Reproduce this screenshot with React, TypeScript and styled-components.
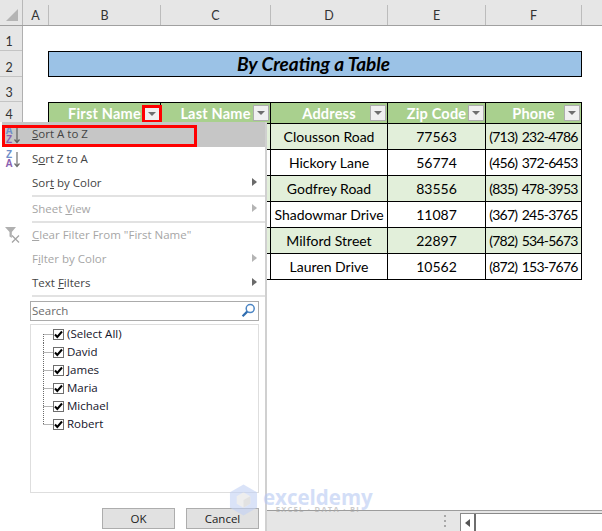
import React from 'react'
import styled, { createGlobalStyle } from 'styled-components'

const uiFont = `"Open Sans", "Noto Sans", "Liberation Sans", sans-serif`
const cellFont = `Lato, "Open Sans", "Liberation Sans", sans-serif`
const columns = '23px 26px 112px 110px 117px 98px 96px 1fr'

const GlobalStyle = createGlobalStyle`
  html, body {
    margin: 0;
    padding: 0;
    background: #fff;
    overflow: hidden;
  }
  * {
    box-sizing: border-box;
  }
`

const Sheet = styled.div`
  position: relative;
  width: 602px;
  height: 531px;
  display: flex;
  flex-direction: column;
  overflow: hidden;
  background: #fff;
`

const ColumnBar = styled.div`
  display: grid;
  grid-template-columns: ${columns};
  height: 26px;
  background: #e6e6e6;
  border-bottom: 1px solid #a0a0a0;
`

const Corner = styled.div`
  display: flex;
  align-items: flex-end;
  padding: 0 0 4px 6px;
  border-right: 1px solid #b8b8b8;
`

const ColumnLabel = styled.div`
  display: flex;
  align-items: center;
  justify-content: center;
  padding-top: 5px;
  font: 12.5px ${cellFont};
  color: #333;
  border-right: 1px solid #bcbcbc;
  border-image: linear-gradient(to bottom, transparent 6px, #bcbcbc 6px) 1;
  &:last-child {
    border-right: 0;
  }
`

const Body = styled.div`
  flex: 1;
  display: flex;
  min-height: 0;
`

const RowGutter = styled.div`
  width: 23px;
  background: #e6e6e6;
  border-right: 1px solid #b0b0b0;
`

const RowLabel = styled.div<{ $h: number }>`
  height: ${(p) => p.$h}px;
  display: flex;
  align-items: flex-end;
  justify-content: center;
  padding: 0 4px 1px 0;
  font: 12.5px/15px ${cellFont};
  color: #333;
  border-bottom: 1px solid #c4c4c4;
`

const Canvas = styled.div`
  flex: 1;
  padding: 25px 0 0 25px;
`

const TitleBar = styled.div`
  width: 534px;
  height: 26px;
  display: flex;
  align-items: center;
  justify-content: center;
  padding: 0 3px 2px 0;
  background: #9bc2e6;
  border: 1px solid #000;
  font: italic 700 19px ${cellFont};
  color: #000;
`

const DataTable = styled.div`
  width: 534px;
  margin-top: 25px;
  border-top: 1px solid #000;
  border-right: 1px solid #000;
`

const TableRow = styled.div<{ $tint?: boolean; $head?: boolean }>`
  display: grid;
  grid-template-columns: 112px 110px 117px 98px 1fr;
  height: ${(p) => (p.$head ? 21 : 26)}px;
  background: ${(p) => (p.$head ? '#a9d08e' : p.$tint ? '#e2efda' : '#fff')};
  border-bottom: 1px solid #000;
`

const HeadCell = styled.div`
  position: relative;
  display: flex;
  align-items: center;
  justify-content: center;
  border-left: 1px solid #000;
  font: 700 14.5px ${cellFont};
  letter-spacing: 0.2px;
  color: #fff;
`

const Cell = styled.div<{ $numeric?: boolean }>`
  display: flex;
  align-items: center;
  justify-content: center;
  border-left: 1px solid #000;
  font: 14px ${cellFont};
  letter-spacing: ${(p) => (p.$numeric ? '-0.75px' : '0')};
  word-spacing: ${(p) => (p.$numeric ? '1.5px' : '0')};
  color: #000;
  white-space: nowrap;
`

const FilterButton = styled.div<{ $marked?: boolean }>`
  position: absolute;
  top: 2px;
  right: ${(p) => (p.$marked ? -2 : 1)}px;
  width: ${(p) => (p.$marked ? 20 : 16)}px;
  height: ${(p) => (p.$marked ? 18 : 16)}px;
  display: flex;
  align-items: center;
  justify-content: center;
  background: #f0f0f0;
  border: ${(p) => (p.$marked ? '3px solid #ff0000' : '1px solid #adadad')};
  z-index: 1;
  &::after {
    content: '';
    border-left: 4px solid transparent;
    border-right: 4px solid transparent;
    border-top: 4px solid #6e6e6e;
  }
`

const StatusBar = styled.div`
  height: 21px;
  display: flex;
  align-items: stretch;
  padding-left: 444px;
  background: #e6e6e6;
  border-top: 1px solid #9c9c9c;
`

const GripDots = styled.div`
  width: 16px;
  display: flex;
  flex-direction: column;
  justify-content: center;
  gap: 3px;
  & > i {
    width: 2px;
    height: 2px;
    background: #a8a8a8;
  }
`

const ScrollTrack = styled.div`
  flex: 1;
  display: flex;
  margin-top: 2px;
  background: #fff;
  border-top: 1px solid #8a8a8a;
  border-left: 1px solid #8a8a8a;
`

const ScrollArrow = styled.div`
  width: 15px;
  display: flex;
  align-items: center;
  justify-content: center;
  border-right: 2px solid #6e6e6e;
  &::after {
    content: '';
    border-top: 4px solid transparent;
    border-bottom: 4px solid transparent;
    border-right: 5px solid #555;
  }
`

const Menu = styled.div`
  position: absolute;
  left: 0;
  top: 122px;
  width: 267px;
  height: 409px;
  display: flex;
  flex-direction: column;
  background: #fff;
  border-right: 2px solid #d0d0d0;
  font: 11.5px ${uiFont};
  z-index: 2;
`

const MenuItem = styled.div<{ $h?: number; $off?: boolean; $active?: boolean }>`
  position: relative;
  flex: none;
  height: ${(p) => p.$h ?? 24}px;
  display: grid;
  grid-template-columns: 32px 1fr 13px;
  align-items: center;
  padding-bottom: 2px;
  background: ${(p) => (p.$active ? 'linear-gradient(to right, #fff 2px, #c6c6c6 2px)' : 'transparent')};
  color: ${(p) => (p.$off ? '#a6a6a6' : '#444')};
  ${(p) =>
    p.$active &&
    `
    &::after {
      content: '';
      box-sizing: border-box;
      position: absolute;
      left: 2px;
      top: 3px;
      width: 195px;
      height: 22px;
      border: 3px solid #ff0000;
    }
  `}
`

const IconSlot = styled.div`
  display: flex;
  align-items: center;
  padding: 2px 0 0 3px;
`

const Label = styled.span`
  white-space: nowrap;
  & u {
    text-underline-offset: 1px;
  }
`

const SubArrow = styled.span<{ $off?: boolean }>`
  width: 0;
  height: 0;
  border-top: 4px solid transparent;
  border-bottom: 4px solid transparent;
  border-left: 5px solid ${(p) => (p.$off ? '#b4b4b4' : '#6a6a6a')};
`

const Divider = styled.div`
  flex: none;
  height: 2px;
  margin-left: 32px;
  background: #e2e2e2;
`

const SearchBox = styled.div`
  flex: none;
  height: 20px;
  margin: 4px 6px 0 30px;
  display: flex;
  align-items: center;
  justify-content: space-between;
  padding: 0 2px 2px 1px;
  border: 1px solid #ababab;
  color: #6b6b6b;
`

const TreeBox = styled.div`
  flex: none;
  height: 169px;
  margin: 3px 6px 0 30px;
  padding: 0 0 0 11px;
  border: 1px solid #dedede;
`

const TreeRow = styled.div`
  height: 18px;
  display: flex;
  align-items: center;
  color: #14142a;
`

const TreeName = styled.span`
  padding-bottom: 2px;
`

const CheckBox = styled.div`
  width: 11px;
  height: 11px;
  margin-right: 3px;
  display: flex;
  align-items: center;
  justify-content: center;
  background: #fff;
  border: 1px solid #6d6d6d;
`

const ButtonRow = styled.div`
  flex: none;
  display: flex;
  justify-content: flex-end;
  gap: 11px;
  margin: 15px 6px 0 0;
`

const DialogButton = styled.div`
  width: 73px;
  height: 21px;
  display: flex;
  align-items: center;
  justify-content: center;
  padding-bottom: 1px;
  background: #e1e1e1;
  border: 1px solid #adadad;
  color: #222;
`

const Watermark = styled.div`
  position: absolute;
  left: 229px;
  top: 484px;
  display: flex;
  align-items: flex-start;
  gap: 5px;
  opacity: 0.6;
  z-index: 3;
`

const MarkText = styled.div`
  display: flex;
  flex-direction: column;
  align-items: center;
  margin-top: 4px;
`

const MarkName = styled.span`
  font: 700 20.5px/18px ${uiFont};
  color: #b7c9f3;
`

const MarkTag = styled.span`
  font: 700 7.5px/7px ${uiFont};
  letter-spacing: 1.3px;
  color: #a8a8a8;
`

const SortIcon = ({ top, bottom, dark }: { top: string; bottom: string; dark?: boolean }) => (
  <svg width="20" height="20" viewBox="0 0 20 20">
    <text x="6" y="9" textAnchor="middle" fontFamily="Liberation Sans" fontSize="10" fontWeight="700" fill="#6f8fc9">
      {top}
    </text>
    <text x="6" y="18" textAnchor="middle" fontFamily="Liberation Sans" fontSize="10" fontWeight="700" fill="#8a5fb0">
      {bottom}
    </text>
    <path d="M14 3v14M11.5 14.5 14 17.5l2.5-3" fill="none" stroke={dark ? '#5f5f5f' : '#707070'} strokeWidth="1.2" />
  </svg>
)

const ClearFilterIcon = () => (
  <svg width="20" height="18" viewBox="0 0 20 18">
    <path d="M2 1h11L8.8 6v6L6.5 10.5V6z" fill="#b0b0b0" />
    <path d="M9 9.5l7 7M16 9.5l-7 7" stroke="#a4a4a4" strokeWidth="1.3" />
  </svg>
)

const SearchIcon = () => (
  <svg width="15" height="15" viewBox="0 0 15 15">
    <circle cx="9.2" cy="5.6" r="4" fill="none" stroke="#4d86c4" strokeWidth="1.5" />
    <path d="M6.2 8.6 1.6 13.2" stroke="#2f6db0" strokeWidth="2.2" />
  </svg>
)

const TreeLine = ({ first, last }: { first?: boolean; last?: boolean }) => (
  <svg width="11" height="18" viewBox="0 0 11 18">
    <path
      d={`M1.5 ${first ? 9 : 0}V${last ? 9 : 18}M1.5 9.5H11`}
      fill="none"
      stroke="#6a6a6a"
      strokeWidth="1"
      strokeDasharray="1 1"
    />
  </svg>
)

const Tick = () => (
  <svg width="9" height="9" viewBox="0 0 9 9">
    <path d="M1 4.5 3.3 7 8 1.5" fill="none" stroke="#000" strokeWidth="2" />
  </svg>
)

const CornerMark = () => (
  <svg width="12" height="12" viewBox="0 0 12 12">
    <path d="M12 0v12H0z" fill="#b4b4b4" />
  </svg>
)

const rows = [
  ['Clousson Road', '77563', '(713) 232-4786'],
  ['Hickory Lane', '56774', '(456) 372-6453'],
  ['Godfrey Road', '83556', '(835) 478-3953'],
  ['Shadowmar Drive', '11087', '(367) 245-3765'],
  ['Milford Street', '22897', '(782) 534-5673'],
  ['Lauren Drive', '10562', '(872) 153-7676'],
]

const names = ['(Select All)', 'David', 'James', 'Maria', 'Michael', 'Robert']

export default function App() {
  return (
    <Sheet>
      <GlobalStyle />
      <ColumnBar>
        <Corner>
          <CornerMark />
        </Corner>
        {['A', 'B', 'C', 'D', 'E', 'F'].map((c) => (
          <ColumnLabel key={c}>{c}</ColumnLabel>
        ))}
        <ColumnLabel />
      </ColumnBar>
      <Body>
        <RowGutter>
          <RowLabel $h={25}>1</RowLabel>
          <RowLabel $h={26}>2</RowLabel>
          <RowLabel $h={25}>3</RowLabel>
          <RowLabel $h={22}>4</RowLabel>
        </RowGutter>
        <Canvas>
          <TitleBar>By Creating a Table</TitleBar>
          <DataTable>
            <TableRow $head>
              <HeadCell>
                First Name
                <FilterButton $marked />
              </HeadCell>
              <HeadCell>
                Last Name
                <FilterButton />
              </HeadCell>
              <HeadCell>
                Address
                <FilterButton />
              </HeadCell>
              <HeadCell>
                Zip Code
                <FilterButton />
              </HeadCell>
              <HeadCell>
                Phone
                <FilterButton />
              </HeadCell>
            </TableRow>
            {rows.map((r, i) => (
              <TableRow key={r[1]} $tint={i % 2 === 0}>
                <Cell />
                <Cell />
                <Cell>{r[0]}</Cell>
                <Cell>{r[1]}</Cell>
                <Cell $numeric>{r[2]}</Cell>
              </TableRow>
            ))}
          </DataTable>
        </Canvas>
      </Body>
      <StatusBar>
        <GripDots>
          <i />
          <i />
          <i />
        </GripDots>
        <ScrollTrack>
          <ScrollArrow />
        </ScrollTrack>
      </StatusBar>

      <Menu>
        <MenuItem $active $h={25}>
          <IconSlot>
            <SortIcon top="A" bottom="Z" dark />
          </IconSlot>
          <Label>
            <u>S</u>ort A to Z
          </Label>
        </MenuItem>
        <MenuItem>
          <IconSlot>
            <SortIcon top="Z" bottom="A" />
          </IconSlot>
          <Label>
            S<u>o</u>rt Z to A
          </Label>
        </MenuItem>
        <MenuItem>
          <span />
          <Label>
            Sor<u>t</u> by Color
          </Label>
          <SubArrow />
        </MenuItem>
        <Divider />
        <MenuItem $off>
          <span />
          <Label>
            Sheet <u>V</u>iew
          </Label>
          <SubArrow $off />
        </MenuItem>
        <Divider />
        <MenuItem $off>
          <IconSlot>
            <ClearFilterIcon />
          </IconSlot>
          <Label>
            <u>C</u>lear Filter From "First Name"
          </Label>
        </MenuItem>
        <MenuItem $off>
          <span />
          <Label>
            F<u>i</u>lter by Color
          </Label>
          <SubArrow $off />
        </MenuItem>
        <MenuItem>
          <span />
          <Label>
            Text <u>F</u>ilters
          </Label>
          <SubArrow />
        </MenuItem>
        <Divider />
        <SearchBox>
          Search
          <SearchIcon />
        </SearchBox>
        <TreeBox>
          {names.map((n, i) => (
            <TreeRow key={n}>
              <TreeLine first={i === 0} last={i === names.length - 1} />
              <CheckBox>
                <Tick />
              </CheckBox>
              <TreeName>{n}</TreeName>
            </TreeRow>
          ))}
        </TreeBox>
        <ButtonRow>
          <DialogButton>OK</DialogButton>
          <DialogButton>Cancel</DialogButton>
        </ButtonRow>
      </Menu>

      <Watermark>
        <svg width="29" height="32" viewBox="0 0 30 32">
          <path d="M15 0 29 8v16l-14 8-14-8V8z" fill="#c3d2f5" />
          <path d="M15 8 22 12v8l-7 4-7-4v-8z" fill="#e4e4e4" />
          <path d="M15 16 22 12v8l-7 4z" fill="#cfcfcf" />
        </svg>
        <MarkText>
          <MarkName>exceldemy</MarkName>
          <MarkTag>EXCEL · DATA · BI</MarkTag>
        </MarkText>
      </Watermark>
    </Sheet>
  )
}
